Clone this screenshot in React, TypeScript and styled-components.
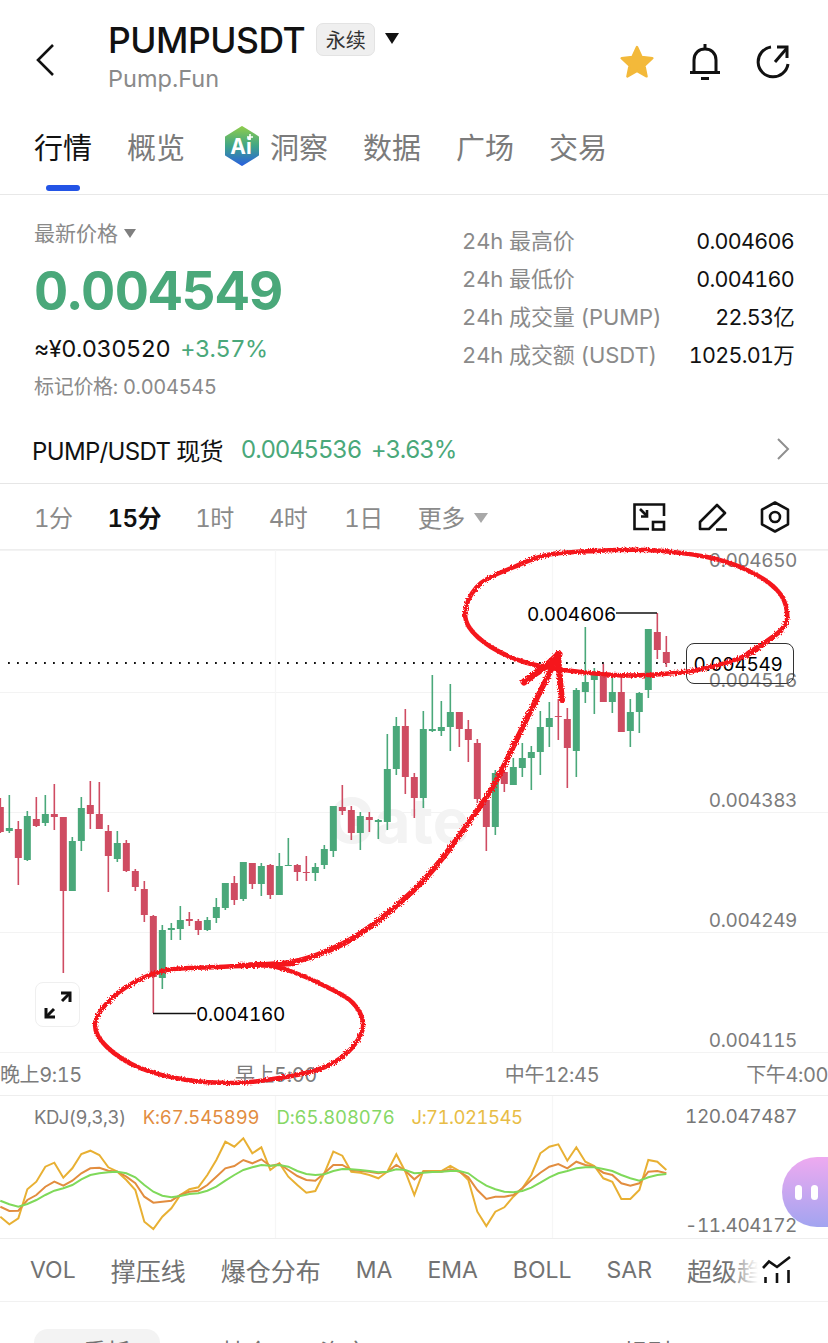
import { FC } from "react";
import styled, { createGlobalStyle } from "styled-components";

const GREEN = "#4aa87a";
const RED = "#cf4c62";
const GRAY = "#8a8a8a";

// candles: up?, wick top, wick bottom, body top, body bottom (page y)
const candles: [number, number, number, number, number][] = [
  [0, 798, 833, 807, 832], [1, 795, 833, 828, 831], [0, 821, 885, 829, 858], [1, 811, 861, 816, 860],
  [0, 797, 827, 819, 826], [1, 795, 826, 814, 823], [0, 784, 830, 814, 817], [0, 817, 973, 817, 891],
  [1, 837, 891, 841, 891], [1, 797, 851, 808, 841], [0, 781, 829, 805, 814], [0, 782, 829, 814, 829],
  [0, 825, 892, 831, 856], [1, 831, 862, 843, 859], [0, 840, 872, 843, 871], [0, 869, 891, 871, 887],
  [0, 881, 922, 889, 915], [0, 915, 1013, 916, 977], [1, 925, 989, 930, 978], [1, 923, 940, 928, 930],
  [1, 906, 940, 920, 929], [0, 912, 926, 919, 921], [0, 919, 935, 921, 930], [1, 917, 931, 920, 930],
  [1, 898, 923, 907, 918], [1, 883, 910, 883, 908], [0, 876, 905, 883, 900], [1, 862, 901, 862, 899],
  [0, 863, 889, 863, 884], [1, 863, 896, 866, 884], [0, 864, 899, 865, 895], [1, 853, 895, 866, 895],
  [1, 838, 866, 865, 866], [0, 864, 881, 865, 872], [0, 856, 881, 872, 873], [1, 863, 881, 867, 873],
  [1, 845, 869, 849, 865], [1, 806, 857, 806, 851], [0, 785, 815, 807, 811], [0, 806, 840, 810, 833],
  [1, 812, 850, 816, 833], [0, 812, 832, 817, 820], [1, 819, 839, 820, 822], [1, 734, 830, 769, 822],
  [1, 717, 775, 726, 769], [0, 709, 794, 726, 777], [0, 773, 818, 777, 798], [1, 711, 808, 729, 798],
  [1, 675, 732, 729, 731], [1, 701, 736, 727, 731], [1, 684, 751, 712, 727], [0, 712, 747, 712, 729],
  [0, 720, 762, 729, 740], [0, 739, 803, 743, 799], [0, 797, 851, 800, 827], [1, 770, 835, 773, 827],
  [0, 770, 792, 772, 784], [1, 758, 785, 767, 785], [1, 743, 777, 758, 768], [1, 746, 790, 752, 758],
  [1, 711, 775, 727, 752], [1, 702, 747, 718, 727], [0, 699, 740, 716, 717], [0, 708, 788, 719, 748],
  [1, 688, 777, 690, 751], [1, 627, 703, 682, 692], [1, 668, 714, 672, 680], [0, 664, 702, 672, 702],
  [1, 677, 713, 692, 702], [0, 675, 732, 692, 732], [1, 699, 747, 712, 731], [1, 692, 733, 693, 712],
  [1, 629, 698, 629, 690], [0, 613, 659, 632, 650], [0, 636, 667, 652, 663],
];

// kdj values, measured as 3x offsets from y=1090
const kLine = [350, 363, 362, 330, 315, 290, 275, 287, 272, 250, 235, 233, 242, 245, 260, 280, 320, 338, 335, 332, 315, 305, 302, 285, 260, 235, 228, 210, 220, 208, 228, 222, 240, 258, 270, 272, 250, 225, 225, 240, 243, 245, 250, 245, 225, 242, 268, 245, 245, 245, 238, 245, 262, 300, 327, 320, 320, 315, 295, 270, 248, 230, 222, 235, 215, 225, 230, 248, 255, 280, 287, 280, 245, 243, 250];
const dLine = [332, 343, 350, 342, 330, 315, 302, 295, 285, 268, 255, 250, 247, 245, 250, 262, 285, 305, 317, 322, 318, 312, 310, 302, 290, 272, 255, 240, 232, 225, 227, 225, 230, 243, 252, 255, 253, 243, 237, 238, 240, 243, 247, 245, 238, 240, 250, 248, 246, 245, 243, 243, 250, 270, 287, 298, 305, 307, 303, 293, 278, 262, 250, 243, 235, 232, 232, 237, 243, 255, 265, 272, 262, 255, 252];
const jLine = [380, 403, 385, 298, 275, 230, 218, 263, 235, 192, 182, 195, 232, 245, 270, 300, 395, 417, 380, 355, 315, 298, 292, 255, 210, 155, 170, 145, 190, 172, 240, 220, 260, 285, 308, 303, 250, 185, 197, 245, 248, 255, 265, 245, 193, 245, 315, 243, 243, 243, 228, 243, 270, 365, 408, 365, 352, 320, 295, 255, 190, 170, 163, 212, 172, 215, 228, 265, 275, 327, 327, 300, 210, 215, 240];

const toPoints = (values: number[]) =>
  values.map((v, i) => `${9 * i + 0.33},${(v / 3 + 1090 - 1096).toFixed(1)}`).join(" ");

// smooth a hand-drawn stroke through the given points
const smooth = (p: number[][]) => {
  let d = `M${p[0][0]} ${p[0][1]}`;
  for (let i = 0; i < p.length - 1; i++) {
    const a = p[Math.max(i - 1, 0)];
    const b = p[i];
    const c = p[i + 1];
    const e = p[Math.min(i + 2, p.length - 1)];
    d += ` C${b[0] + (c[0] - a[0]) / 6} ${b[1] + (c[1] - a[1]) / 6} ${c[0] - (e[0] - b[0]) / 6} ${c[1] - (e[1] - b[1]) / 6} ${c[0]} ${c[1]}`;
  }
  return d;
};

const topLoop = [[747, 654], [781, 630], [787, 612], [777, 590], [747, 570], [707, 557], [647, 550], [594, 551], [547, 555], [514, 567], [481, 583], [466, 607], [469, 627], [491, 647], [524, 662], [564, 670], [614, 675], [647, 675], [697, 670], [747, 655], [781, 631]];
const bottomLoop = [[293, 964], [267, 965], [217, 967], [167, 970], [133, 983], [107, 1003], [95, 1025], [107, 1047], [140, 1068], [187, 1080], [233, 1083], [267, 1080], [317, 1070], [347, 1053], [363, 1027], [353, 1003], [327, 987], [293, 972], [270, 966], [240, 965]];
const arrowShaft = [[250, 965], [287, 963], [317, 955], [350, 940], [383, 917], [414, 890], [431, 872], [454, 843], [474, 815], [494, 785], [514, 745], [531, 710], [559, 654]];
const arrowLeft = [[524, 682], [536, 673], [547, 665], [559, 654]];
const arrowRight = [[562, 700], [560, 680], [558, 654]];

const axisPrices = ["0.004650", "0.004516", "0.004383", "0.004249", "0.004115"];
const overview = [
  ["24h 最高价", "0.004606"],
  ["24h 最低价", "0.004160"],
  ["24h 成交量 (PUMP)", "22.53亿"],
  ["24h 成交额 (USDT)", "1025.01万"],
];
const periods = [
  { label: "1分", gap: 0 },
  { label: "15分", gap: 35, active: true },
  { label: "1时", gap: 34 },
  { label: "4时", gap: 35 },
  { label: "1日", gap: 37 },
  { label: "更多", gap: 35 },
];
const indicators = [
  { name: "VOL" },
  { name: "撑压线", cjk: true },
  { name: "爆仓分布", cjk: true },
  { name: "MA" },
  { name: "EMA" },
  { name: "BOLL" },
  { name: "SAR" },
  { name: "超级趋势", cjk: true },
];
const times = [
  { label: "晚上9:15", gap: 0 },
  { label: "早上5:00", gap: 153 },
  { label: "中午12:45", gap: 188 },
  { label: "下午4:00", gap: 147 },
];

const GlobalStyle = createGlobalStyle`
  html, body {
    margin: 0;
    background: #fff;
  }
  * {
    box-sizing: border-box;
  }
`;

const App: FC = () => {
  return (
    <Page>
      <GlobalStyle />
      <Header>
        <BackButton width="22" height="34" viewBox="0 0 22 34">
          <path d="M19 2 L4 17 L19 32" fill="none" stroke="#111" strokeWidth="2.6" />
        </BackButton>
        <TitleBlock>
          <TitleRow>
            <Symbol>PUMPUSDT</Symbol>
            <Badge>永续</Badge>
            <BlackCaret />
          </TitleRow>
          <Subtitle>Pump.Fun</Subtitle>
        </TitleBlock>
        <HeaderIcons>
          <svg width="36" height="36" viewBox="0 0 36 36">
            <path d="M18 3 L22.6 13 L33.4 14.2 L25.4 21.6 L27.6 32.4 L18 27 L8.4 32.4 L10.6 21.6 L2.6 14.2 L13.4 13 Z" fill="#f3b93a" stroke="#f3b93a" strokeWidth="2.4" strokeLinejoin="round" />
          </svg>
          <svg width="34" height="38" viewBox="0 0 34 38" fill="none" stroke="#111" strokeWidth="3">
            <path d="M17 1 V6" />
            <path d="M6 29 V17 C6 10 11 6 17 6 C23 6 28 10 28 17 V29" />
            <path d="M2 29.5 H32" />
            <path d="M13 35.5 H21" />
          </svg>
          <svg width="36" height="36" viewBox="0 0 36 36" fill="none" stroke="#111" strokeWidth="3">
            <path d="M16 3 A15 15 0 1 0 33 20" />
            <path d="M20 18 L32 4" />
            <path d="M22 3 H32 V14" />
          </svg>
        </HeaderIcons>
      </Header>

      <TabBar>
        <Tab $active>行情</Tab>
        <Tab>概览</Tab>
        <InsightTab>
          <svg width="36" height="40" viewBox="0 0 36 40">
            <defs>
              <linearGradient id="aiFill" x1="0" y1="0" x2="0" y2="1">
                <stop offset="0" stopColor="#8ccb4e" />
                <stop offset="0.5" stopColor="#3fa587" />
                <stop offset="1" stopColor="#2a62dc" />
              </linearGradient>
            </defs>
            <path d="M18 1 L34 11 V29 L18 39 L2 29 V11 Z" fill="url(#aiFill)" stroke="url(#aiFill)" strokeWidth="2" strokeLinejoin="round" />
            <text x="17" y="28" textAnchor="middle" fontFamily="Inter, sans-serif" fontSize="21" fontWeight="700" fill="#fff">Ai</text>
            <path d="M26 8 V14 M23 11 H29" stroke="#fff" strokeWidth="1.6" />
          </svg>
          <span>洞察</span>
        </InsightTab>
        <Tab>数据</Tab>
        <Tab>广场</Tab>
        <Tab>交易</Tab>
        <TabMarker />
      </TabBar>

      <Summary>
        <PriceColumn>
          <PriceLabel>
            最新价格 <GrayCaret />
          </PriceLabel>
          <LastPrice>0.004549</LastPrice>
          <FiatRow>
            <span>≈¥0.030520</span>
            <Gain>+3.57%</Gain>
          </FiatRow>
          <MarkPrice>标记价格: 0.004545</MarkPrice>
        </PriceColumn>
        <StatColumn>
          {overview.map(([label, value]) => (
            <StatRow key={label}>
              <StatLabel>{label}</StatLabel>
              <StatValue>{value}</StatValue>
            </StatRow>
          ))}
        </StatColumn>
      </Summary>

      <SpotRow>
        <span>PUMP/USDT 现货</span>
        <SpotGain>0.0045536</SpotGain>
        <SpotGain>+3.63%</SpotGain>
        <SpotChevron width="14" height="24" viewBox="0 0 14 24">
          <path d="M2 2 L12 12 L2 22" fill="none" stroke="#8f8f8f" strokeWidth="2" />
        </SpotChevron>
      </SpotRow>

      <PeriodBar>
        {periods.map((p) => (
          <Period key={p.label} $active={p.active} $gap={p.gap}>
            {p.label}
          </Period>
        ))}
        <PeriodCaret />
        <PeriodIcons>
          <svg width="34" height="30" viewBox="0 0 34 30" fill="none" stroke="#111" strokeWidth="2.6">
            <path d="M32 14 V2.5 H2.5 V27 H17" />
            <rect x="21" y="20" width="11" height="7.5" />
            <path d="M8 7 L15 14" />
            <path d="M15 8 V14.5 H9" />
          </svg>
          <svg width="32" height="30" viewBox="0 0 32 30" fill="none" stroke="#111" strokeWidth="2.6" strokeLinejoin="round">
            <path d="M3 27 V20 L20 3 L28 11 L12 27 Z" />
            <path d="M19 27.5 H30" />
          </svg>
          <svg width="30" height="32" viewBox="0 0 30 32" fill="none" stroke="#111" strokeWidth="2.6" strokeLinejoin="round">
            <path d="M15 1.5 L28 8.7 V23.3 L15 30.5 L2 23.3 V8.7 Z" />
            <circle cx="15" cy="16" r="5" />
          </svg>
        </PeriodIcons>
      </PeriodBar>

      <Chart>
        <Watermark>Gate</Watermark>
        <ChartLayer viewBox="0 550 828 503">
          {[550.5, 692.5, 812.5, 932.5, 1052.5].map((y) => (
            <line key={y} x1="0" x2="828" y1={y} y2={y} stroke="#f3f3f3" strokeWidth="1.2" />
          ))}
          {[275.5, 552.5].map((x) => (
            <line key={x} x1={x} x2={x} y1="550" y2="1053" stroke="#f6f6f6" strokeWidth="1.2" />
          ))}
          <line x1="8" x2="686" y1="663" y2="663" stroke="#111" strokeWidth="2" strokeDasharray="1.8 7.2" />
          {candles.map(([up, wickTop, wickBottom, bodyTop, bodyBottom], i) => {
            const x = 9 * i + 0.33;
            const color = up ? GREEN : RED;
            return (
              <g key={i} fill={color}>
                <rect x={x - 0.8} y={wickTop} width="1.6" height={wickBottom - wickTop} />
                <rect x={x - 3.5} y={bodyTop} width="7" height={bodyBottom - bodyTop} />
              </g>
            );
          })}
          <path d="M616 613 H657" stroke="#111" strokeWidth="1.3" fill="none" />
          <path d="M153 1013.5 H196" stroke="#111" strokeWidth="1.3" fill="none" />
        </ChartLayer>
        <PriceAxis>
          {axisPrices.map((p) => (
            <span key={p}>{p}</span>
          ))}
        </PriceAxis>
        <Extreme $top={53} $left={527}>0.004606</Extreme>
        <Extreme $top={453} $left={196}>0.004160</Extreme>
        <LastTag>0.004549</LastTag>
        <ExpandButton>
          <svg width="30" height="30" viewBox="0 0 30 30" fill="none" stroke="#111" strokeWidth="3">
            <path d="M3 27 L11 19" />
            <path d="M3 18 V27 H12" />
            <path d="M27 3 L19 11" />
            <path d="M18 3 H27 V12" />
          </svg>
        </ExpandButton>
      </Chart>

      <TimeAxis>
        {times.map((t) => (
          <TimeLabel key={t.label} $gap={t.gap}>
            {t.label}
          </TimeLabel>
        ))}
      </TimeAxis>

      <Kdj>
        <KdjGrid viewBox="0 0 828 142">
          {[275.5, 552.5].map((x) => (
            <line key={x} x1={x} x2={x} y1="0" y2="142" stroke="#f6f6f6" strokeWidth="1.2" />
          ))}
          <polyline points={toPoints(jLine)} fill="none" stroke="#e8b033" strokeWidth="2" />
          <polyline points={toPoints(kLine)} fill="none" stroke="#e28d3f" strokeWidth="2" />
          <polyline points={toPoints(dLine)} fill="none" stroke="#7fd95a" strokeWidth="2" />
        </KdjGrid>
        <KdjLegend>
          <LegendItem $color="#7a7a7a" $spacing={-0.5}>KDJ(9,3,3)</LegendItem>
          <LegendItem $color="#e28d3f" $spacing={-0.15}>K:67.545899</LegendItem>
          <LegendItem $color="#86d765" $spacing={-0.1}>D:65.808076</LegendItem>
          <LegendItem $color="#e8bd45" $spacing={-0.5}>J:71.021545</LegendItem>
        </KdjLegend>
        <KdjScale>
          <span>120.047487</span>
          <span>-11.404172</span>
        </KdjScale>
      </Kdj>

      <IndicatorBar>
        {indicators.map((item) => (
          <Indicator key={item.name} $cjk={item.cjk}>
            {item.name}
          </Indicator>
        ))}
        <IndicatorToggle>
          <svg width="30" height="28" viewBox="0 0 30 28" fill="none" stroke="#111" strokeWidth="2.6">
            <path d="M1 12 L7 5.5 L15 11 L28 1" />
            <path d="M3.5 21 V27" />
            <path d="M15 17 V27" />
            <path d="M26.5 14 V27" />
          </svg>
        </IndicatorToggle>
      </IndicatorBar>

      <BottomTabs>
        <BottomChip>委托</BottomChip>
        <BottomTab $gap={62}>持仓</BottomTab>
        <BottomTab $gap={50}>资产</BottomTab>
        <BottomTab $gap={255}>规则</BottomTab>
      </BottomTabs>

      <Assistant>
        <AssistantEye />
        <AssistantEye />
      </Assistant>

      <Scribble viewBox="0 0 828 1343">
        <defs>
          <filter id="rough" x="-5%" y="-5%" width="110%" height="110%">
            <feTurbulence type="fractalNoise" baseFrequency="0.7" numOctaves="2" seed="4" />
            <feDisplacementMap in="SourceGraphic" scale="4" />
          </filter>
        </defs>
        <g fill="none" stroke="#f5141c" strokeWidth="4.5" strokeLinecap="round" strokeLinejoin="round" filter="url(#rough)">
          <path d={smooth(topLoop)} />
          <path d={smooth(bottomLoop)} />
          <path d={smooth(arrowShaft)} strokeWidth="5.5" />
          <path d={smooth(arrowLeft)} strokeWidth="7" />
          <path d={smooth(arrowRight)} strokeWidth="6" />
        </g>
      </Scribble>
    </Page>
  );
};

export default App;

const Page = styled.div`
  position: relative;
  width: 828px;
  height: 1343px;
  overflow: hidden;
  background: #fff;
  color: #111;
  font-family: Inter, "Noto Sans CJK SC", sans-serif;
  font-variant-numeric: tabular-nums;
`;

const Header = styled.header`
  display: flex;
  align-items: flex-start;
  height: 115px;
  padding: 43px 0 0 34px;
`;

const BackButton = styled.svg`
  flex: none;
`;

const TitleBlock = styled.div`
  display: flex;
  flex-direction: column;
  margin: -25px 0 0 52px;
`;

const TitleRow = styled.div`
  display: flex;
  align-items: center;
  height: 44px;
`;

const Symbol = styled.span`
  font-size: 35.5px;
  font-weight: 500;
  letter-spacing: -0.5px;
`;

const Badge = styled.span`
  display: flex;
  align-items: center;
  justify-content: center;
  width: 59px;
  height: 33px;
  margin: -2px 0 0 11px;
  background: #efefef;
  border: 1px solid #e3e3e3;
  border-radius: 7px;
  font-size: 20px;
  color: #333;
`;

const BlackCaret = styled.i`
  width: 0;
  height: 0;
  margin: -4px 0 0 10px;
  border-style: solid;
  border-width: 11px 7.5px 0;
  border-color: #111 transparent transparent;
`;

const Subtitle = styled.span`
  margin-top: 3px;
  font-size: 23.5px;
  line-height: 28px;
  color: ${GRAY};
`;

const HeaderIcons = styled.div`
  display: flex;
  align-items: center;
  gap: 33px;
  margin-left: auto;
  padding-right: 37px;
`;

const TabBar = styled.nav`
  position: relative;
  display: flex;
  align-items: center;
  gap: 35px;
  height: 80px;
  padding: 0 0 18px 34px;
  border-bottom: 1px solid #e8e8e8;
`;

const Tab = styled.span<{ $active?: boolean }>`
  font-size: 29px;
  color: ${(p) => (p.$active ? "#111" : "#7b7b7b")};
`;

const InsightTab = styled(Tab)`
  display: flex;
  align-items: center;
  gap: 10px;
  margin-left: 4px;
`;

const TabMarker = styled.i`
  position: absolute;
  left: 46px;
  bottom: 3px;
  width: 34px;
  height: 6px;
  border-radius: 3px;
  background: #2354e6;
`;

const Summary = styled.section`
  display: flex;
  justify-content: space-between;
  height: 225px;
  padding: 24px 34px 0;
`;

const PriceColumn = styled.div`
  display: flex;
  flex-direction: column;
`;

const PriceLabel = styled.div`
  display: flex;
  align-items: center;
  gap: 6px;
  height: 26px;
  font-size: 21px;
  color: ${GRAY};
`;

const GrayCaret = styled.i`
  width: 0;
  height: 0;
  margin-top: 2px;
  border-style: solid;
  border-width: 9px 6px 0;
  border-color: #7f7f7f transparent transparent;
`;

const LastPrice = styled.div`
  margin-top: 16px;
  font-size: 53px;
  line-height: 60px;
  font-weight: 700;
  letter-spacing: -0.7px;
  color: ${GREEN};
`;

const FiatRow = styled.div`
  display: flex;
  gap: 10px;
  margin-top: 13px;
  font-size: 23.5px;
  line-height: 30px;
  letter-spacing: -0.5px;
`;

const Gain = styled.span`
  color: ${GREEN};
`;

const MarkPrice = styled.div`
  margin-top: 11px;
  font-size: 20px;
  line-height: 24px;
  letter-spacing: -0.3px;
  color: ${GRAY};
`;

const StatColumn = styled.div`
  display: flex;
  flex-direction: column;
  width: 332px;
  margin-top: 3px;
`;

const StatRow = styled.div`
  display: flex;
  align-items: baseline;
  justify-content: space-between;
  height: 38px;
  line-height: 38px;
`;

const StatLabel = styled.span`
  font-size: 22px;
  letter-spacing: -0.1px;
  color: ${GRAY};
`;

const StatValue = styled.span`
  font-size: 21.5px;
  letter-spacing: -0.7px;
`;

const SpotRow = styled.div`
  display: flex;
  align-items: center;
  gap: 10px;
  height: 64px;
  padding: 0 38px 5px 32px;
  border-bottom: 1px solid #e6e6e6;
  font-size: 24px;
  letter-spacing: -0.65px;
  span:nth-child(2) {
    margin-left: 8px;
  }
`;

const SpotGain = styled.span`
  letter-spacing: -1.2px;
  color: ${GREEN};
`;

const SpotChevron = styled.svg`
  margin-left: auto;
`;

const PeriodBar = styled.div`
  display: flex;
  align-items: center;
  height: 66px;
  padding: 0 38px 0 34px;
  border-bottom: 1px solid #eee;
`;

const Period = styled.span<{ $active?: boolean; $gap: number }>`
  margin-left: ${(p) => p.$gap}px;
  font-size: 24px;
  font-weight: ${(p) => (p.$active ? 600 : 400)};
  letter-spacing: -0.5px;
  color: ${(p) => (p.$active ? "#111" : GRAY)};
`;

const PeriodCaret = styled(GrayCaret)`
  margin-left: 9px;
  border-width: 10px 7px 0;
  border-color: #a8a8a8 transparent transparent;
`;

const PeriodIcons = styled.div`
  display: flex;
  align-items: center;
  gap: 31px;
  margin-left: auto;
`;

const Chart = styled.section`
  position: relative;
  height: 503px;
`;

const ChartLayer = styled.svg`
  position: absolute;
  inset: 0;
  width: 100%;
  height: 100%;
`;

const Watermark = styled.span`
  position: absolute;
  left: 328px;
  top: 236px;
  font-size: 62px;
  line-height: 70px;
  font-weight: 700;
  color: #f3f3f3;
`;

const PriceAxis = styled.div`
  position: absolute;
  top: -1px;
  right: 31px;
  display: flex;
  flex-direction: column;
  gap: 96px;
  font-size: 19px;
  line-height: 24px;
  letter-spacing: -0.4px;
  color: #7c7c7c;
`;

const Extreme = styled.span<{ $top: number; $left: number }>`
  position: absolute;
  top: ${(p) => p.$top}px;
  left: ${(p) => p.$left}px;
  font-size: 19px;
  line-height: 24px;
  letter-spacing: -0.3px;
  color: #000;
`;

const LastTag = styled.span`
  position: absolute;
  top: 93px;
  left: 686px;
  display: flex;
  align-items: center;
  justify-content: center;
  width: 108px;
  height: 41px;
  padding: 2px 4px 0 0;
  border: 1px solid #333;
  border-radius: 8px;
  font-size: 19px;
  letter-spacing: -0.3px;
  color: #000;
`;

const ExpandButton = styled.div`
  position: absolute;
  top: 432px;
  left: 35px;
  display: flex;
  align-items: center;
  justify-content: center;
  width: 45px;
  height: 45px;
  background: #fff;
  border: 1px solid #efefef;
  border-radius: 8px;
`;

const TimeAxis = styled.div`
  display: flex;
  align-items: center;
  height: 43px;
  padding-bottom: 2px;
  border-bottom: 1px solid #eee;
  font-size: 20px;
  letter-spacing: -0.4px;
  color: #7c7c7c;
  white-space: nowrap;
`;

const TimeLabel = styled.span<{ $gap: number }>`
  flex: none;
  margin-left: ${(p) => p.$gap}px;
`;

const Kdj = styled.section`
  position: relative;
  height: 142px;
`;

const KdjGrid = styled.svg`
  position: absolute;
  inset: 0;
  width: 100%;
  height: 100%;
`;

const KdjLegend = styled.div`
  position: relative;
  display: flex;
  gap: 17px;
  padding: 9px 0 0 34px;
  font-size: 18.5px;
  line-height: 24px;
`;

const LegendItem = styled.span<{ $color: string; $spacing: number }>`
  flex: none;
  letter-spacing: ${(p) => p.$spacing}px;
  color: ${(p) => p.$color};
`;

const KdjScale = styled.div`
  position: absolute;
  top: 9px;
  right: 31px;
  bottom: 0;
  display: flex;
  flex-direction: column;
  justify-content: space-between;
  text-align: right;
  font-size: 19px;
  line-height: 24px;
  letter-spacing: -0.4px;
  color: #777;
  z-index: 2;
`;

const IndicatorBar = styled.div`
  position: relative;
  display: flex;
  align-items: center;
  gap: 35px;
  height: 64px;
  padding-left: 30px;
  border-top: 1px solid #eee;
  border-bottom: 1px solid #f1f1f1;
  overflow: hidden;
  white-space: nowrap;
`;

const Indicator = styled.span<{ $cjk?: boolean }>`
  flex: none;
  font-size: ${(p) => (p.$cjk ? 25 : 23)}px;
  color: #727272;
`;

const IndicatorToggle = styled.div`
  position: absolute;
  top: 0;
  right: 0;
  bottom: 0;
  display: flex;
  align-items: center;
  width: 100px;
  padding-left: 34px;
  background: linear-gradient(90deg, rgba(255, 255, 255, 0), #fff 30px);
`;

const BottomTabs = styled.div`
  display: flex;
  align-items: flex-start;
  padding: 27px 0 0 34px;
  font-size: 24px;
  color: #727272;
`;

const BottomChip = styled.span`
  flex: none;
  width: 126px;
  height: 44px;
  padding: 4px 0 0 20px;
  border-radius: 14px;
  background: #f3f3f3;
  text-align: center;
`;

const BottomTab = styled.span<{ $gap: number }>`
  flex: none;
  margin: 4px 0 0 ${(p) => p.$gap}px;
`;

const Assistant = styled.div`
  position: absolute;
  top: 1157px;
  right: 0;
  display: flex;
  align-items: center;
  gap: 9px;
  width: 46px;
  height: 70px;
  padding-left: 13px;
  border-radius: 35px 0 0 35px;
  background: linear-gradient(180deg, #eeaaf0, #a2a4f0);
`;

const AssistantEye = styled.i`
  flex: none;
  width: 7px;
  height: 15px;
  border-radius: 4px;
  background: #fff;
`;

const Scribble = styled.svg`
  position: absolute;
  inset: 0;
  width: 100%;
  height: 100%;
  pointer-events: none;
`;
